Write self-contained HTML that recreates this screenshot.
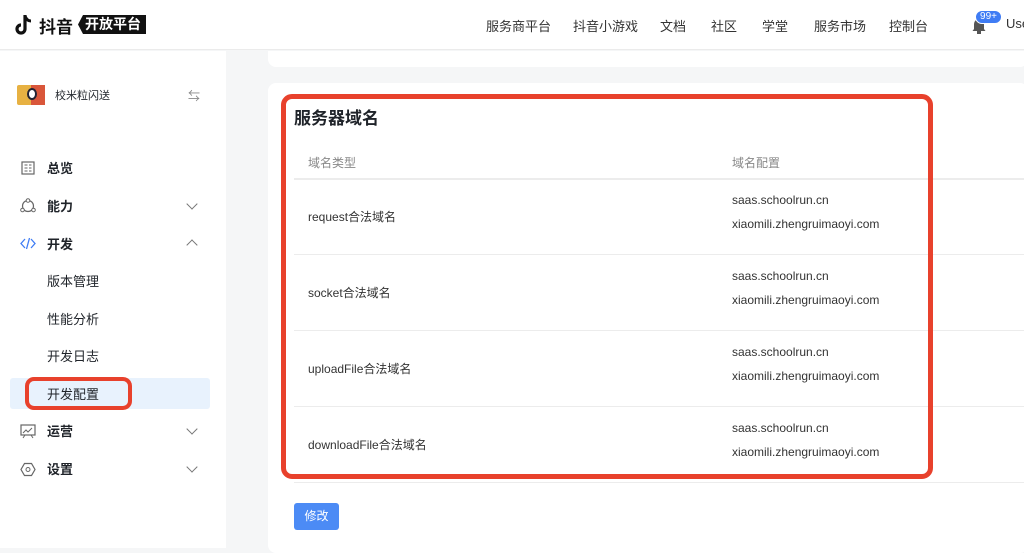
<!DOCTYPE html>
<html><head><meta charset="utf-8"><style>
*{margin:0;padding:0;box-sizing:border-box}
body{width:1024px;height:548px;overflow:hidden;background:#f5f6f7;font-family:"Liberation Sans","Noto Sans CJK SC",sans-serif;color:#1f2329;position:relative}
.hdr{position:absolute;left:0;top:0;width:1024px;height:50px;background:#fff;border-bottom:1px solid #ebebeb;z-index:5}
.nav{position:absolute;top:16px;font-size:13px;color:#333}
.side{position:absolute;left:0;top:51px;width:226px;height:497px;background:#fff}
.mi{position:absolute;left:47px;font-size:13px;color:#1f2329}
.bold{font-weight:bold}
.chev{position:absolute;left:188px;width:8px;height:8px;border-right:1.5px solid #777;border-bottom:1.5px solid #777}
.card{position:absolute;background:#fff;border-radius:8px}
.t{position:absolute;font-size:12px;color:#333}
.line{position:absolute;left:294px;width:730px;height:1px;background:#ececec}
</style></head><body>
<div class="hdr">
 <svg style="position:absolute;left:14px;top:13px" width="22" height="24" viewBox="0 0 22 24"><path d="M11 2v14a4 4 0 1 1-4-4" fill="none" stroke="#111" stroke-width="3.2"/><path d="M11 3c1 3 3 5 6 5" fill="none" stroke="#111" stroke-width="3"/></svg>
 <div style="position:absolute;left:39px;top:13px;font-size:17px;font-weight:bold;color:#111">抖音</div>
 <div style="position:absolute;left:78px;top:15px;width:68px;height:19px;background:#111;color:#fff;font-size:14px;font-weight:bold;line-height:19px;padding-left:7px;clip-path:polygon(5px 0,100% 0,100% 100%,5px 100%,0 50%)">开放平台</div>
 <div class="nav" style="left:486px">服务商平台</div>
 <div class="nav" style="left:573px">抖音小游戏</div>
 <div class="nav" style="left:660px">文档</div>
 <div class="nav" style="left:711px">社区</div>
 <div class="nav" style="left:762px">学堂</div>
 <div class="nav" style="left:814px">服务市场</div>
 <div class="nav" style="left:889px">控制台</div>
 <svg style="position:absolute;left:971px;top:17px" width="16" height="17" viewBox="0 0 16 17"><path d="M3 12V7a5 5 0 0 1 10 0v5l1.5 2h-13z" fill="#555"/><rect x="6" y="14" width="4" height="3" fill="#555"/></svg>
 <div style="position:absolute;left:975px;top:10px;width:27px;height:14px;background:#3f7cf4;border-radius:7px;color:#fff;font-size:10px;text-align:center;line-height:12px;border:1px solid #fff">99+</div>
 <div class="nav" style="left:1006px">User</div>
</div>
<div class="side">
 <div style="position:absolute;left:17px;top:34px;width:28px;height:20px;background:#e7b142;border-radius:2px"></div>
 <div style="position:absolute;left:31px;top:34px;width:14px;height:20px;background:#d9563a"></div>
 <div style="position:absolute;left:27px;top:37px;width:10px;height:12px;border:2px solid #223;border-radius:50%;background:#fff"></div>
 <div class="mi" style="left:55px;top:36px;font-size:11px">校米粒闪送</div>
 <div style="position:absolute;left:188px;top:36px;color:#888;font-size:12px">⇆</div>
 <svg style="position:absolute;left:21px;top:110px" width="14" height="14"><rect x="1" y="1" width="12" height="12" fill="none" stroke="#666" stroke-width="1.2"/><path d="M3.5 4h3M3.5 7h3M3.5 10h3M8 4h2.5M8 7h2.5M8 10h2.5" stroke="#666"/></svg>
 <div class="mi bold" style="top:107px">总览</div>
 <svg style="position:absolute;left:20px;top:147px" width="16" height="15"><circle cx="8" cy="8" r="5.5" fill="none" stroke="#666" stroke-width="1.2"/><circle cx="8" cy="2.5" r="1.8" fill="#fff" stroke="#666"/><circle cx="2.5" cy="12" r="1.8" fill="#fff" stroke="#666"/><circle cx="13.5" cy="12" r="1.8" fill="#fff" stroke="#666"/></svg>
 <div class="mi bold" style="top:145px">能力</div><div class="chev" style="top:149px;transform:rotate(45deg)"></div>
 <svg style="position:absolute;left:20px;top:185px" width="16" height="15"><path d="M5 3L1 7.5 5 12M11 3l4 4.5L11 12M9.5 2L6.5 13" fill="none" stroke="#3f7cf4" stroke-width="1.3"/></svg>
 <div class="mi bold" style="top:183px">开发</div><div class="chev" style="top:190px;transform:rotate(-135deg)"></div>
 <div class="mi" style="top:220px">版本管理</div>
 <div class="mi" style="top:258px">性能分析</div>
 <div class="mi" style="top:295px">开发日志</div>
 <div style="position:absolute;left:10px;top:327px;width:200px;height:31px;background:#e8f2fd;border-radius:3px"></div>
 <div style="position:absolute;left:25px;top:326px;width:107px;height:33px;border:4px solid #e8412c;border-radius:9px"></div>
 <div class="mi" style="top:333px">开发配置</div>
 <svg style="position:absolute;left:20px;top:373px" width="16" height="15"><rect x="1" y="1" width="14" height="10" fill="none" stroke="#666" stroke-width="1.2"/><path d="M3 9l3-3 2 2 4-4M5 11l-2 3M11 11l2 3" fill="none" stroke="#666"/></svg>
 <div class="mi bold" style="top:370px">运营</div><div class="chev" style="top:374px;transform:rotate(45deg)"></div>
 <svg style="position:absolute;left:20px;top:411px" width="16" height="15"><path d="M4.5 1.5h7L15 7.5l-3.5 6h-7L1 7.5z" fill="none" stroke="#666" stroke-width="1.2"/><circle cx="8" cy="7.5" r="2" fill="none" stroke="#666"/></svg>
 <div class="mi bold" style="top:408px">设置</div><div class="chev" style="top:412px;transform:rotate(45deg)"></div>
</div>
<div class="card" style="left:268px;top:51px;width:760px;height:16px;border-radius:0 0 8px 8px"></div>
<div class="card" style="left:268px;top:83px;width:760px;height:470px"></div>
<div style="position:absolute;left:294px;top:104px;font-size:17px;font-weight:bold;color:#1f2329">服务器域名</div>
<div class="t" style="left:308px;top:154px;color:#888">域名类型</div>
<div class="t" style="left:732px;top:154px;color:#888">域名配置</div>
<div class="line" style="top:178px;height:2px"></div>
<div class="line" style="top:254px"></div>
<div class="line" style="top:330px"></div>
<div class="line" style="top:406px"></div>
<div class="line" style="top:482px"></div>
<div class="t" style="left:308px;top:208px">request合法域名</div>
<div class="t" style="left:308px;top:284px">socket合法域名</div>
<div class="t" style="left:308px;top:360px">uploadFile合法域名</div>
<div class="t" style="left:308px;top:436px">downloadFile合法域名</div>
<div class="t" style="left:732px;top:193px">saas.schoolrun.cn</div><div class="t" style="left:732px;top:217px">xiaomili.zhengruimaoyi.com</div>
<div class="t" style="left:732px;top:269px">saas.schoolrun.cn</div><div class="t" style="left:732px;top:293px">xiaomili.zhengruimaoyi.com</div>
<div class="t" style="left:732px;top:345px">saas.schoolrun.cn</div><div class="t" style="left:732px;top:369px">xiaomili.zhengruimaoyi.com</div>
<div class="t" style="left:732px;top:421px">saas.schoolrun.cn</div><div class="t" style="left:732px;top:445px">xiaomili.zhengruimaoyi.com</div>
<div style="position:absolute;left:281px;top:94px;width:652px;height:385px;border:5px solid #e8412c;border-radius:11px"></div>
<div style="position:absolute;left:294px;top:503px;width:45px;height:27px;background:#4c8bf5;border-radius:3px;color:#fff;font-size:12px;text-align:center;line-height:27px">修改</div>
</body></html>
